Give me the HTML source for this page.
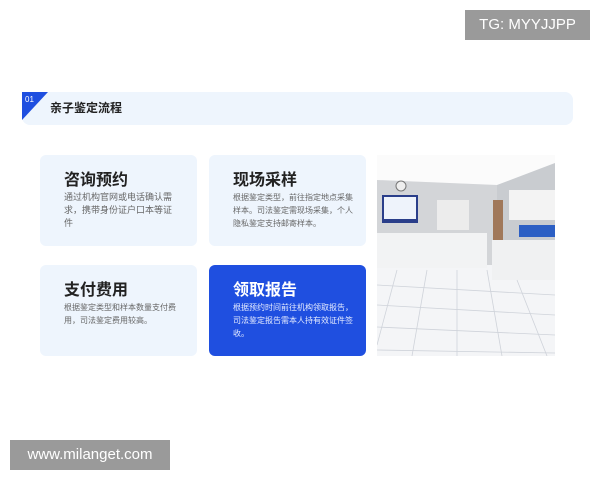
<!DOCTYPE html>
<html><head><meta charset="utf-8"><style>
body{margin:0;width:600px;height:480px;background:#fff;position:relative;overflow:hidden;font-family:"Liberation Sans","Noto Sans CJK SC",sans-serif}
.abs{position:absolute}
.bar{left:22px;top:92px;width:551px;height:33px;background:#eef5fd;border-radius:8px}
.card{background:#eef5fd;border-radius:6px;width:157px;height:91px}
.card h3{margin:0;position:absolute;left:24px;top:11px;font-size:16px;font-weight:bold;color:#222}
.card p{margin:0;position:absolute;left:24px;top:36px;width:120px;font-size:8px;line-height:13px;color:#666}
.wm{background:#9a9a9a;color:#fff;font-size:15px;text-align:center}
</style></head><body>
<div class="abs bar"></div>
<svg class="abs" style="left:22px;top:92px" width="28" height="30"><polygon points="0,0 26,0 0,28" fill="#1f4fe0"/><text x="3" y="10" font-size="8" fill="#fff" font-family="Liberation Sans">01</text></svg>
<div class="abs" style="left:50px;top:99px;font-size:12px;font-weight:bold;color:#222">亲子鉴定流程</div>

<div class="abs card" style="left:40px;top:155px"><h3>咨询预约</h3><p style="font-size:9px;line-height:13px;width:110px">通过机构官网或电话确认需求，携带身份证户口本等证件</p></div>
<div class="abs card" style="left:209px;top:155px"><h3>现场采样</h3><p>根据鉴定类型，前往指定地点采集样本。司法鉴定需现场采集，个人隐私鉴定支持邮寄样本。</p></div>
<div class="abs card" style="left:40px;top:265px"><h3>支付费用</h3><p>根据鉴定类型和样本数量支付费用，司法鉴定费用较高。</p></div>
<div class="abs card" style="left:209px;top:265px;background:#1f4fe0"><h3 style="color:#fff">领取报告</h3><p style="color:#e6ecff">根据预约时间前往机构领取报告，司法鉴定报告需本人持有效证件签收。</p></div>

<svg class="abs" style="left:377px;top:155px" width="178" height="201">
<rect width="178" height="201" fill="#f4f5f7"/>
<polygon points="0,0 178,0 178,8 120,30 0,25" fill="#fbfbfb"/>
<polygon points="0,25 120,30 120,110 0,110" fill="#d3d5d8"/>
<polygon points="120,30 178,8 178,120 120,110" fill="#c9ccd0"/>
<rect x="5" y="40" width="36" height="28" fill="#2a3e8a"/><rect x="7" y="42" width="32" height="22" fill="#eef3fb"/>
<circle cx="24" cy="31" r="5" fill="#eee" stroke="#777"/>
<rect x="60" y="45" width="32" height="30" fill="#ececec"/>
<rect x="0" y="78" width="110" height="35" fill="#f2f3f4"/>
<rect x="132" y="35" width="46" height="30" fill="#f3f3f3"/>
<rect x="116" y="45" width="10" height="40" fill="#a0785a"/>
<rect x="142" y="70" width="36" height="12" fill="#2c5fc4"/>
<rect x="115" y="85" width="63" height="40" fill="#f0f1f2"/>
<g stroke="#cfd3da" stroke-width="0.8">
<line x1="0" y1="130" x2="178" y2="140"/><line x1="0" y1="150" x2="178" y2="160"/><line x1="0" y1="172" x2="178" y2="180"/><line x1="0" y1="195" x2="178" y2="198"/>
<line x1="20" y1="115" x2="0" y2="190"/><line x1="50" y1="115" x2="35" y2="201"/><line x1="80" y1="115" x2="80" y2="201"/><line x1="110" y1="115" x2="125" y2="201"/><line x1="140" y1="125" x2="170" y2="201"/>
</g>
</svg>

<div class="abs wm" style="left:465px;top:10px;width:125px;height:30px;line-height:30px">TG: MYYJJPP</div>
<div class="abs wm" style="left:10px;top:440px;width:160px;height:30px;line-height:30px">www.milanget.com</div>
</body></html>
